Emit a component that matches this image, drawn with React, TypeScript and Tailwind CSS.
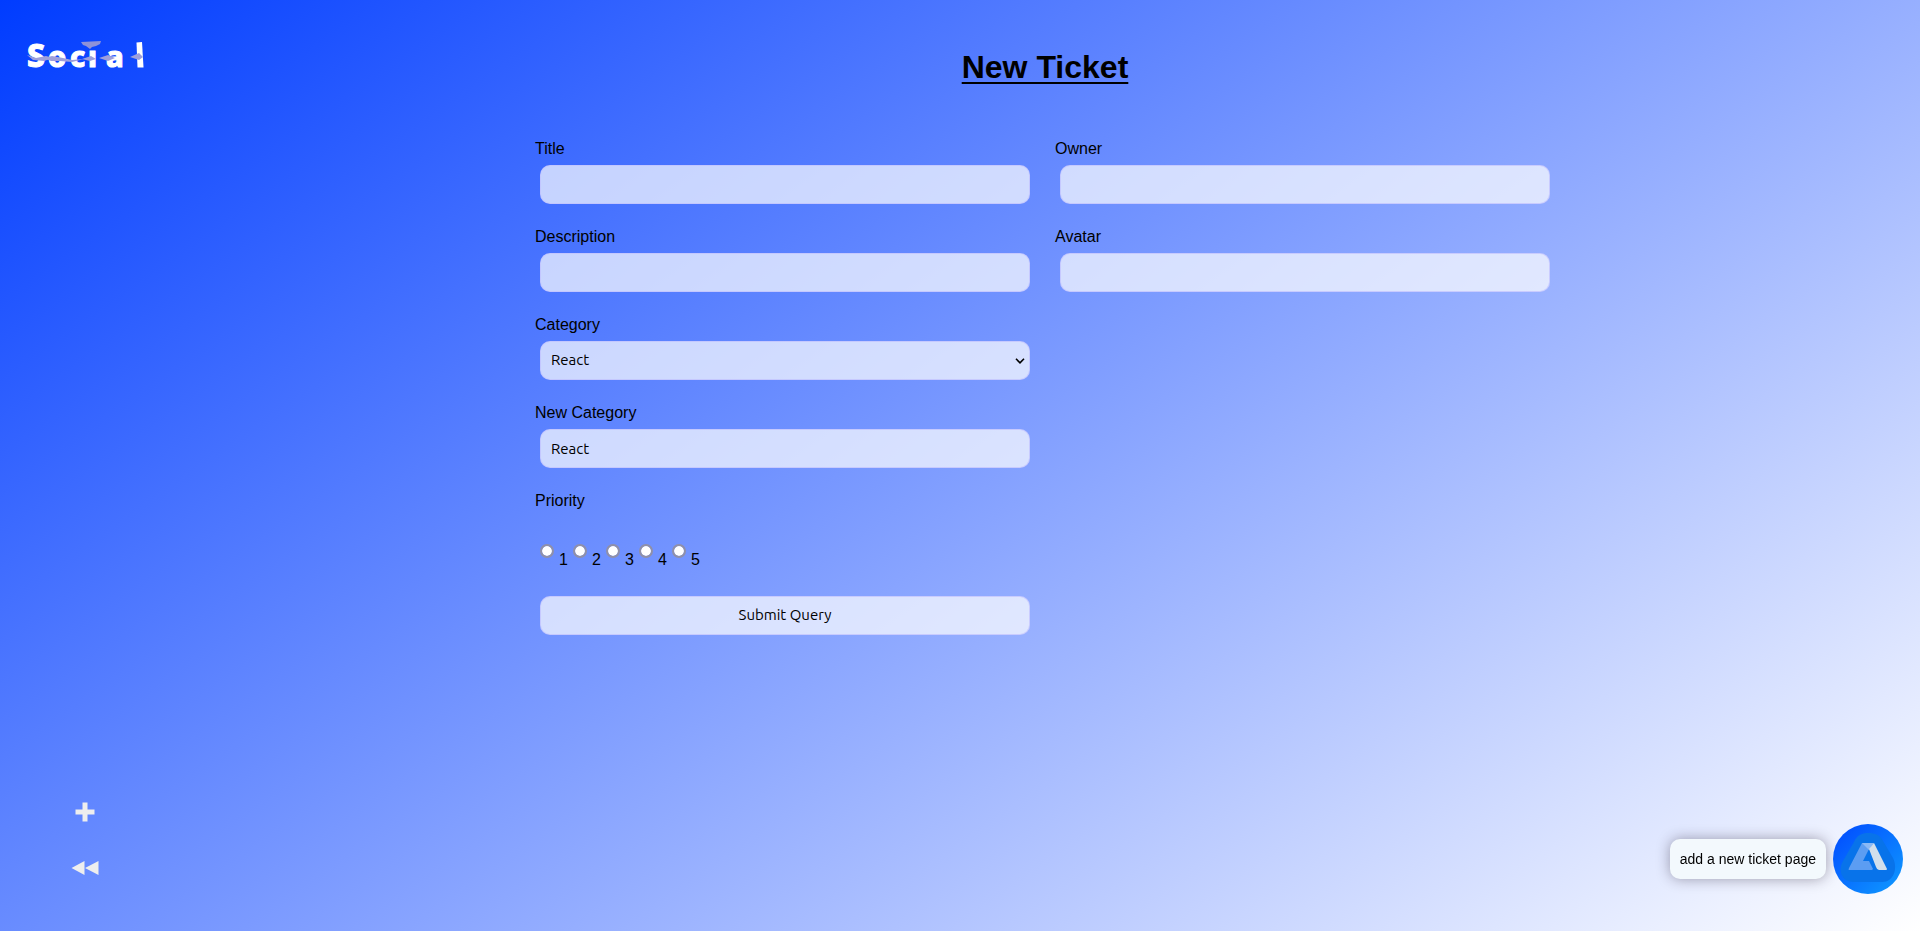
import React, { useState } from "react";

const field =
  "mx-[5px] h-[39px] rounded-[10px] border border-[#c0c0ff]/70 bg-white/70 px-[10px] font-['Ubuntu','Noto_Sans',sans-serif] text-[15px] text-black outline-none";

function Field({ id, label, value = "" }: { id: string; label: string; value?: string }) {
  return (
    <div className="flex flex-col gap-[7px]">
      <label htmlFor={id} className="leading-[18px]">{label}</label>
      <input id={id} defaultValue={value} className={field} />
    </div>
  );
}

function Logo() {
  return (
    <svg viewBox="0 0 130 56" className="h-14 w-[130px]" role="img" aria-label="Social">
      <g fill="white" stroke="white" strokeWidth="1" fontFamily="Noto Sans" fontWeight="800">
        <text x="3" y="41" fontSize="32">S</text>
        <text x="24" y="41" fontSize="29">o</text>
        <text x="46" y="41" fontSize="29">c</text>
        <text x="64" y="41" fontSize="29">ı</text>
        <text x="82" y="41" fontSize="29">a</text>
      </g>
      <path fill="white" d="M112.500 16.500 118 16 119.500 41.500 113.500 41.500Z" />
      <path fill="#8f92d8" d="M57 16 77 15 76 18 72 20 68 21 66 23 62 20 59 19Z" />
      <g fill="#9d9fdc">
        <path d="M3 29 12 32 22 30 29 32 20 35 9 34Z" />
        <path d="M20 32 28 30 39 32 48 34 60 33 48 36 36 35 27 35Z" />
        <path d="M58 33 67 30 72 33 66 35ZM75 32 84 29 91 32 84 35ZM106 31 115 27 119 31 115 34Z" />
      </g>
    </svg>
  );
}

export default function App() {
  const [priority, setPriority] = useState("");
  return (
    <div className="flex min-h-screen bg-[linear-gradient(145deg,#003cff,#ffffff)] font-['Liberation_Sans',Arial,sans-serif] text-base text-black">
      <nav className="flex w-[170px] shrink-0 flex-col justify-between">
        <a href="#home" className="mt-[26px] ml-6"><Logo /></a>
        <div className="mb-12 flex flex-col items-center gap-[26px]">
          <button aria-label="New ticket" className="flex h-[30px] w-10 items-center justify-center">
            <svg viewBox="0 0 20 20" className="size-5" fill="#eee"><path d="M7.5 .5h5v7h7v5h-7v7h-5v-7h-7v-5h7Z" /></svg>
          </button>
          <button aria-label="Back" className="flex h-[30px] w-10 items-center justify-center">
            <svg viewBox="0 0 28 14" className="h-[14px] w-7" fill="#eee"><path d="M.5 7 13.500 0v14ZM14 7 27.500 0v14Z" /></svg>
          </button>
        </div>
      </nav>
      <main className="flex flex-1 flex-col items-center">
        <h1 className="mt-[49px] text-[32px] leading-[37px] font-bold underline decoration-2 underline-offset-4">New Ticket</h1>
        <form className="mt-[54px] grid w-full max-w-[1020px] grid-cols-2 gap-x-5" onSubmit={(e) => e.preventDefault()}>
          <section className="flex flex-col gap-6">
            <Field id="title" label="Title" />
            <Field id="description" label="Description" />
            <div className="flex flex-col gap-[7px]">
              <label htmlFor="category" className="leading-[18px]">Category</label>
              <div className="relative flex flex-col">
                <select id="category" className={field + " appearance-none"}>
                  <option>React</option>
                </select>
                <svg viewBox="0 0 10 6" className="pointer-events-none absolute top-[17px] right-[10px] h-[6px] w-[10px]" fill="none" stroke="black" strokeWidth="1.6"><path d="m1 .8 4 4 4-4" /></svg>
              </div>
            </div>
            <Field id="new-category" label="New Category" value="React" />
            <fieldset>
              <legend className="leading-[18px]">Priority</legend>
              <div className="mt-8 ml-[5px] flex h-[30px]">
                {["1", "2", "3", "4", "5"].map((n) => (
                  <div key={n} className="flex w-[33px] gap-[5px]">
                    <input
                      id={"priority-" + n}
                      type="radio"
                      name="priority"
                      value={n}
                      checked={priority === n}
                      onChange={() => setPriority(n)}
                      className="mt-[2px] size-[14px] shrink-0 appearance-none rounded-full border-2 border-[#9090a8] bg-white bg-clip-padding checked:border-4 checked:border-blue-600"
                    />
                    <label htmlFor={"priority-" + n} className="mt-[9px] leading-[18px]">{n}</label>
                  </div>
                ))}
              </div>
            </fieldset>
            <button type="submit" className={field}>Submit Query</button>
          </section>
          <section className="flex flex-col gap-6">
            <Field id="owner" label="Owner" />
            <Field id="avatar" label="Avatar" />
          </section>
        </form>
      </main>
      <aside className="fixed right-[17px] bottom-[37px] flex items-center gap-[7px]">
        <p className="rounded-[10px] bg-[#f3f9fd] px-[10px] py-[11px] text-sm leading-[18px] shadow-[0_0_14px_rgba(40,30,50,0.4)]">add a new ticket page</p>
        <button aria-label="Open assistant" className="size-[70px] overflow-hidden rounded-full bg-[linear-gradient(135deg,#0048ff,#109cff)]">
          <svg viewBox="0 0 70 70" className="size-[70px]">
            <path fill="#0873ea" d="M35 9C42 9 47 11 50 17L60 34C65 44 61 58 49 58H21C8 58 5 46 10 37L21 18C24 11 29 9 35 9Z" />
            <path fill="#5c9df2" d="M29 19H39L30 37H36L40 45 39 46H16Q15 46 16 44Z" />
            <path fill="#8bb9f5" d="M29 19H41L36 26Z" />
            <path fill="#d2dfec" d="M36 25 41 19 54 45Q54 46 53 46H46Q44 46 43 43Z" />
          </svg>
        </button>
      </aside>
    </div>
  );
}
